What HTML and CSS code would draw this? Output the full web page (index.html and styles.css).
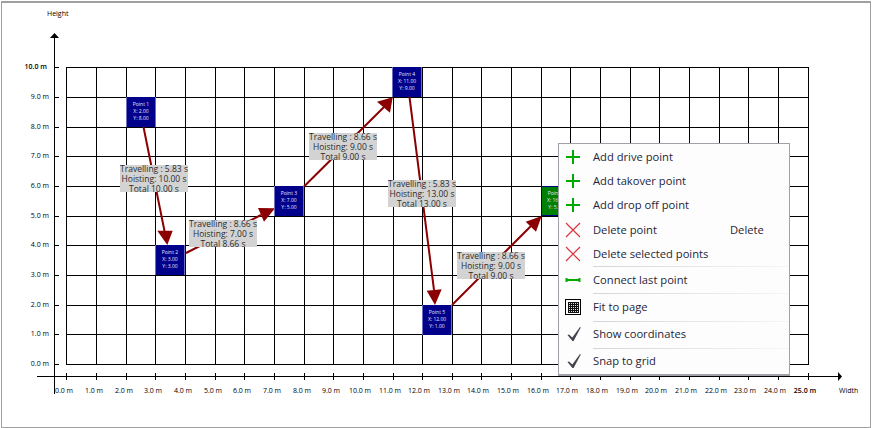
FILE: index.html
```html
<!DOCTYPE html>
<html lang="en">
<head>
<meta charset="utf-8">
<title>Route editor</title>
<link rel="stylesheet" href="styles.css">
</head>
<body>
<main class="frame">
  <svg class="chart" width="872" height="428" viewBox="0 0 872 428">
    <path class="grid" d="M66.5 67V365M96.5 67V365M126.5 67V365M155.5 67V365M185.5 67V365M215.5 67V365M244.5 67V365M274.5 67V365M304.5 67V365M333.5 67V365M363.5 67V365M393.5 67V365M422.5 67V365M452.5 67V365M481.5 67V365M511.5 67V365M541.5 67V365M570.5 67V365M600.5 67V365M630.5 67V365M659.5 67V365M689.5 67V365M719.5 67V365M748.5 67V365M778.5 67V365M808.5 67V365M66 67.5H809M66 97.5H809M66 127.5H809M66 156.5H809M66 186.5H809M66 216.5H809M66 245.5H809M66 275.5H809M66 305.5H809M66 334.5H809M66 364.5H809"/>
    <path class="grid" d="M54.5 36V394M37 376.5H840M54 67.5H59M54 97.5H59M54 127.5H59M54 156.5H59M54 186.5H59M54 216.5H59M54 245.5H59M54 275.5H59M54 305.5H59M54 334.5H59M54 364.5H59M66.5 373V380M96.5 373V380M126.5 373V380M155.5 373V380M185.5 373V380M215.5 373V380M244.5 373V380M274.5 373V380M304.5 373V380M333.5 373V380M363.5 373V380M393.5 373V380M422.5 373V380M452.5 373V380M481.5 373V380M511.5 373V380M541.5 373V380M570.5 373V380M600.5 373V380M630.5 373V380M659.5 373V380M689.5 373V380M719.5 373V380M748.5 373V380M778.5 373V380M808.5 373V380"/>
    <path class="axis-head" d="M54.5 33L59 38H50ZM842 376.5L838 372V381Z"/>
    <g class="axis-text">
      <text x="47" y="16">Height</text>
      <text x="839" y="393">Width</text>
      <g class="y-labels">
        <text class="major" x="47" y="69">10.0 m</text>
        <text x="49" y="99">9.0 m</text>
        <text x="49" y="129">8.0 m</text>
        <text x="49" y="158">7.0 m</text>
        <text x="49" y="188">6.0 m</text>
        <text x="49" y="218">5.0 m</text>
        <text x="49" y="247">4.0 m</text>
        <text x="49" y="277">3.0 m</text>
        <text x="49" y="307">2.0 m</text>
        <text x="49" y="336">1.0 m</text>
        <text x="49" y="366">0.0 m</text>
      </g>
      <g class="x-labels">
        <text x="64" y="393">0.0 m</text>
        <text x="94" y="393">1.0 m</text>
        <text x="124" y="393">2.0 m</text>
        <text x="153" y="393">3.0 m</text>
        <text x="183" y="393">4.0 m</text>
        <text x="213" y="393">5.0 m</text>
        <text x="242" y="393">6.0 m</text>
        <text x="272" y="393">7.0 m</text>
        <text x="302" y="393">8.0 m</text>
        <text x="331" y="393">9.0 m</text>
        <text x="360" y="393">10.0 m</text>
        <text x="390" y="393">11.0 m</text>
        <text x="419" y="393">12.0 m</text>
        <text x="449" y="393">13.0 m</text>
        <text x="478" y="393">14.0 m</text>
        <text x="508" y="393">15.0 m</text>
        <text x="538" y="393">16.0 m</text>
        <text x="567" y="393">17.0 m</text>
        <text x="597" y="393">18.0 m</text>
        <text x="627" y="393">19.0 m</text>
        <text x="656" y="393">20.0 m</text>
        <text x="686" y="393">21.0 m</text>
        <text x="716" y="393">22.0 m</text>
        <text x="745" y="393">23.0 m</text>
        <text x="775" y="393">24.0 m</text>
        <text class="major" x="805" y="393">25.0 m</text>
      </g>
    </g>
    <path class="edge" d="M143.5 127L164.5 231M186 253L261 215M304 186.5L384 107M409.5 97L434 290M452 305L531 226"/>
    <path class="edge-head" d="M167.3 245L157.3 230.7H172.7ZM275 208.3L258 208L264 221.7ZM392.7 97.3L377 101.7L390 112.7ZM435 305L426.7 290.7L441.7 289.3ZM541.7 216L525.7 221.7L536 231.7Z"/>
  </svg>

  <div class="node n1">Point 1<br>X: 2.00<br>Y: 8.00</div>
  <div class="node n2">Point 2<br>X: 3.00<br>Y: 3.00</div>
  <div class="node n3">Point 3<br>X: 7.00<br>Y: 5.00</div>
  <div class="node n4">Point 4<br>X: 11.00<br>Y: 9.00</div>
  <div class="node n5">Point 5<br>X: 12.00<br>Y: 1.00</div>
  <div class="node n6">Point 6<br>X: 16.00<br>Y: 5.00</div>

  <div class="tip t1">Travelling : 5.83 s<br>Hoisting: 10.00 s<br>Total 10.00 s</div>
  <div class="tip t2">Travelling : 8.66 s<br>Hoisting: 7.00 s<br>Total 8.66 s</div>
  <div class="tip t3">Travelling : 8.66 s<br>Hoisting: 9.00 s<br>Total 9.00 s</div>
  <div class="tip t4">Travelling : 5.83 s<br>Hoisting: 13.00 s<br>Total 13.00 s</div>
  <div class="tip t5">Travelling : 8.66 s<br>Hoisting: 9.00 s<br>Total 9.00 s</div>

  <nav class="menu">
    <div class="item">
      <svg class="icon" viewBox="0 0 16 16"><path class="plus" d="M1 8H15M8 1V15"/></svg>
      <span>Add drive point</span>
    </div>
    <div class="item">
      <svg class="icon" viewBox="0 0 16 16"><path class="plus" d="M1 8H15M8 1V15"/></svg>
      <span>Add takover point</span>
    </div>
    <div class="item">
      <svg class="icon" viewBox="0 0 16 16"><path class="plus" d="M1 8H15M8 1V15"/></svg>
      <span>Add drop off point</span>
    </div>
    <div class="item">
      <svg class="icon" viewBox="0 0 16 16"><path class="cross" d="M1 1L15 15M15 1L1 15"/></svg>
      <span class="label">Delete point</span>
      <span class="shortcut">Delete</span>
    </div>
    <div class="item">
      <svg class="icon" viewBox="0 0 16 16"><path class="cross" d="M1 1L15 15M15 1L1 15"/></svg>
      <span>Delete selected points</span>
    </div>
    <div class="item ruled">
      <svg class="icon" viewBox="0 0 16 16"><path class="link" d="M1 8H15M1.5 6V10M14.500 6V10"/></svg>
      <span>Connect last point</span>
    </div>
    <div class="item ruled">
      <svg class="icon" viewBox="0 0 16 16">
        <defs>
          <pattern id="dots" width="2" height="2" patternUnits="userSpaceOnUse" x="3" y="3">
            <rect width="2" height="2" fill="#111"/>
            <rect x="1" y="1" width="1" height="1" fill="#ddd"/>
          </pattern>
        </defs>
        <rect class="fit-frame" x="0.5" y="0.5" width="15" height="15"/>
        <rect x="3" y="3" width="11" height="11" fill="url(#dots)"/>
      </svg>
      <span>Fit to page</span>
    </div>
    <div class="item ruled">
      <svg class="icon" viewBox="0 0 16 16"><path class="check" d="M2.500 9L4 8.500L7.300 11.500L15 1L15.800 1.500L8.600 15H7.400Z"/></svg>
      <span>Show coordinates</span>
    </div>
    <div class="item ruled">
      <svg class="icon" viewBox="0 0 16 16"><path class="check" d="M2.500 9L4 8.500L7.300 11.500L15 1L15.800 1.500L8.600 15H7.400Z"/></svg>
      <span>Snap to grid</span>
    </div>
  </nav>
</main>
</body>
</html>
```
FILE: styles.css
```css
html, body {
  margin: 0;
  padding: 0;
  background: #fff;
}

.frame {
  position: relative;
  width: 872px;
  height: 428px;
  overflow: hidden;
  font-family: "Open Sans", "Liberation Sans", sans-serif;
}

.frame::after {
  content: "";
  position: absolute;
  left: 1px;
  top: 1px;
  width: 868px;
  height: 424px;
  border: 1px solid #a0a0a0;
  border-top-width: 2px;
  pointer-events: none;
  box-sizing: content-box;
}

.chart {
  position: absolute;
  left: 0;
  top: 0;
}

.grid {
  fill: none;
  stroke: #000;
  stroke-width: 1;
  shape-rendering: crispEdges;
}

.axis-head { fill: #000; }

.axis-text text {
  font-size: 7px;
  fill: #000;
}

.y-labels text { text-anchor: end; }
.x-labels text { text-anchor: middle; }
.axis-text .major { font-weight: 600; }

.edge {
  fill: none;
  stroke: #8b0000;
  stroke-width: 2;
}

.edge-head { fill: #8b0000; }

.node {
  position: absolute;
  width: 30px;
  height: 30px;
  box-sizing: border-box;
  padding-top: 4px;
  background: #00008b;
  border-left: 1px solid #6f6fc0;
  border-right: 1px solid #6f6fc0;
  color: #e6e6ff;
  font-size: 5px;
  line-height: 7px;
  text-align: center;
  white-space: nowrap;
}

.n1 { left: 126px; top: 97px; }
.n2 { left: 155px; top: 245px; }
.n3 { left: 274px; top: 186px; }
.n4 { left: 392px; top: 67px; }
.n5 { left: 422px; top: 305px; }
.n6 {
  left: 541px;
  top: 186px;
  background: #008000;
  border: 1px solid #00008b;
  padding-top: 3px;
}

.tip {
  position: absolute;
  width: 68px;
  height: 27px;
  background: #d3d3d3;
  color: #2b2b2b;
  font-size: 8.500px;
  line-height: 10px;
  text-align: center;
  white-space: nowrap;
}

.tip::before {
  content: "";
  display: block;
  height: 0;
  margin-bottom: -1px;
}

.t1 { left: 120px; top: 165px; }
.t2 { left: 189px; top: 220px; }
.t3 { left: 309px; top: 133px; }
.t4 { left: 388px; top: 180px; }
.t5 { left: 457px; top: 252px; }

.menu {
  position: absolute;
  left: 558px;
  top: 143px;
  width: 232px;
  height: 233px;
  box-sizing: border-box;
  padding-top: 1px;
  display: flex;
  flex-direction: column;
  background: #fdfdfd;
  border: 1px solid #a0a0a8;
  border-bottom-width: 2px;
  color: #1f1f3a;
  font-size: 11.200px;
}

.item {
  position: relative;
  display: flex;
  align-items: center;
  flex: 0 0 24.200px;
  padding-left: 34px;
}

.item span { padding-bottom: 1px; }

.item.ruled { flex-basis: 27.300px; }

.item.ruled::before {
  content: "";
  position: absolute;
  left: 34px;
  right: 0;
  top: 0;
  height: 1px;
  background: linear-gradient(to right, #d4d4dc, #f6f6f8);
}

.icon {
  position: absolute;
  left: 6px;
  top: 50%;
  width: 16px;
  height: 16px;
  margin-top: -8px;
}

.plus { fill: none; stroke: #00aa00; stroke-width: 2; }
.cross { fill: none; stroke: #d8343c; stroke-width: 1.200; }
.link { fill: none; stroke: #00aa00; stroke-width: 2; }
.fit-frame { fill: #fff; stroke: #000; stroke-width: 1; }
.check { fill: #44444e; }

.label { width: 137px; }
```
